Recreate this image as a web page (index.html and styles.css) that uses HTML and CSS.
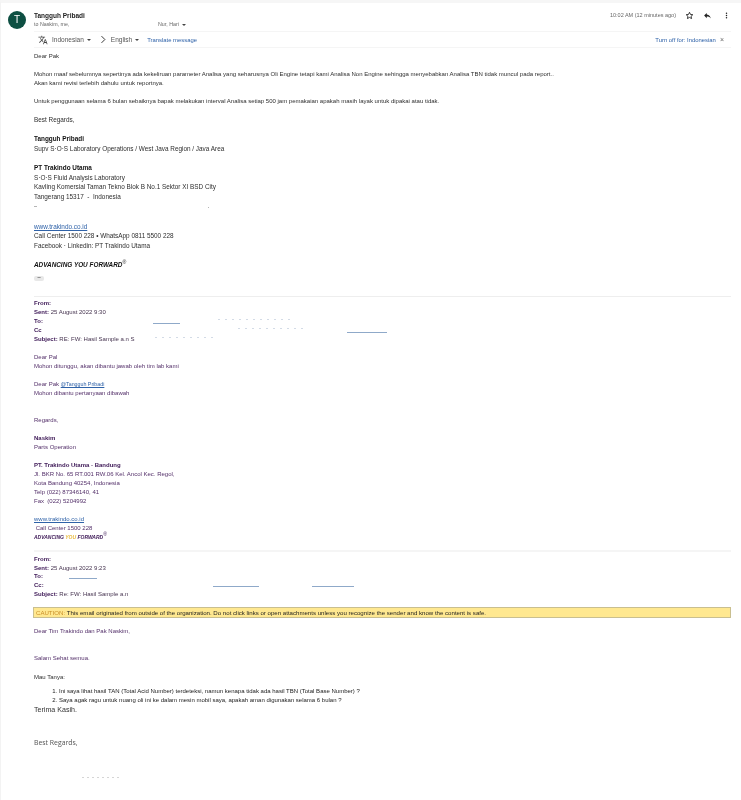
FILE: index.html
```html
<!DOCTYPE html>
<html lang="id">

<head>
    <meta charset="UTF-8">
    <meta name="viewport" content="width=device-width, initial-scale=1.0">
    <title>Tangguh Pribadi - mail</title>
    <link rel="stylesheet" href="styles.css">
</head>

<body>
    <div class="mail">
        <div class="head">
            <div class="avatar">T</div>
            <div class="who">
                <div class="sender">Tangguh Pribadi</div>
                <div class="to"><span class="to-main">to Naskim, me,</span><span>Nur, Hari</span><span class="caret"></span></div>
            </div>
            <div class="time">10:02 AM (12 minutes ago)</div>
            <svg class="icon" viewBox="0 0 24 24"><path fill="none" stroke="#222" stroke-width="2.400" stroke-linejoin="round" d="M12 3.500l2.600 5.700 6.200.7-4.600 4.200 1.300 6.100-5.500-3.100-5.500 3.100 1.300-6.100-4.600-4.200 6.200-.7z"/></svg>
            <svg class="icon" viewBox="0 0 24 24"><path fill="#222" d="M10 9V5l-7 7 7 7v-4.100c5 0 8.500 1.600 11 5.100-1-5-4-10-11-11z"/></svg>
            <svg class="icon icon-last" viewBox="0 0 24 24"><path fill="#222" d="M12 8a2 2 0 100-4 2 2 0 000 4zm0 2a2 2 0 100 4 2 2 0 000-4zm0 6a2 2 0 100 4 2 2 0 000-4z"/></svg>
        </div>

        <div class="translate">
            <svg class="tr-icon" viewBox="0 0 24 24"><path fill="#444" d="M12.900 15.100l-2.600-2.500c1.800-2 3-4.200 3.800-6.600H17V4h-7V2H8v2H1v2h11.200c-.7 1.900-1.700 3.800-3.200 5.400-.9-1-1.700-2.100-2.300-3.400h-2c.7 1.600 1.700 3.200 3 4.600l-5.100 5L4 19l5-5 3.100 3.100zM18.500 10h-2L12 22h2l1.100-3h4.800l1.100 3h2zm-2.600 7l1.600-4.300 1.600 4.300z"/></svg>
            <span class="tr-lang">Indonesian</span><span class="caret"></span>
            <svg class="tr-arrow" viewBox="0 0 10 12"><path fill="none" stroke="#333" stroke-width="1.300" d="M3 1.500L7.500 6 3 10.500"/></svg>
            <span class="tr-lang">English</span><span class="caret"></span>
            <a class="tr-link" href="#">Translate message</a>
            <a class="tr-off" href="#">Turn off for: Indonesian</a>
            <span class="tr-x">×</span>
        </div>

        <div class="body">
            <p>Dear Pak</p>
            <p class="gap">Mohon maaf sebelumnya sepertinya ada kekeliruan parameter Analisa yang seharusnya Oli Engine tetapi kami Analisa Non Engine sehingga menyebabkan Analisa TBN tidak muncul pada report..<br>Akan kami revisi terlebih dahulu untuk reportnya.</p>
            <p class="gap">Untuk penggunaan selama 6 bulan sebaiknya bapak melakukan interval Analisa setiap 500 jam pemakaian apakah masih layak untuk dipakai atau tidak.</p>
            <p class="gap regards">Best Regards,</p>

            <div class="sig">
                <p><b>Tangguh Pribadi</b><br>Supv S·O·S Laboratory Operations / West Java Region / Java Area</p>
                <p class="sig-gap"><b>PT Trakindo Utama</b><br>S·O·S Fluid Analysis Laboratory<br>Kavling Komersial Taman Tekno Blok B No.1 Sektor XI BSD City<br>Tangerang 15317 &nbsp;-&nbsp; Indonesia</p>
                <div class="blank-line"><i class="mark mark-a"></i><i class="mark mark-b"></i></div>
                <p class="sig-gap"><a href="#">www.trakindo.co.id</a><br>Call Center 1500 228 • WhatsApp 0811 5500 228<br>Facebook · Linkedin: PT Trakindo Utama</p>
                <p class="motto">ADVANCING YOU FORWARD<sup>®</sup></p>
                <div class="more-dots">•••</div>
            </div>

            <hr class="rule">

            <div class="quote">
                <div class="meta">
                    <b>From:</b><br><b>Sent:</b> 25 August 2022 9:30<br><b>To:</b><br><b>Cc</b><br><b>Subject:</b> RE: FW: Hasil Sample a.n S
                    <i class="line line-1"></i><i class="line faint line-2"></i><i class="line faint line-3"></i><i class="line line-4"></i><i class="line faint line-5"></i>
                </div>
                <p class="gap-q">Dear Pal<br>Mohon ditunggu, akan dibantu jawab oleh tim lab kami</p>
                <p class="gap-q">Dear Pak <a class="mention" href="#">@Tangguh Pribadi</a><br>Mohon dibantu pertanyaan dibawah</p>
                <p class="gap-wide">Regards,</p>
                <p class="gap-q"><b>Naskim</b><br>Parts Operation</p>
                <p class="gap-q"><b>PT. Trakindo Utama - Bandung</b><br>Jl. BKR No. 65 RT.001 RW.06 Kel. Ancol Kec. Regol,<br>Kota Bandung 40254, Indonesia<br>Telp (022) 87346140, 41<br>Fax&nbsp; (022) 5204992</p>
                <p class="gap-q"><a href="#">www.trakindo.co.id</a><br>&nbsp;Call Center 1500 228</p>
                <p class="motto-small">ADVANCING <span class="you">YOU</span> FORWARD<sup>®</sup></p>
            </div>

            <hr class="rule rule-2">

            <div class="quote">
                <div class="meta meta-2">
                    <b>From:</b><br><b>Sent:</b> 25 August 2022 9:23<br><b>To:</b><br><b>Cc:</b><br><b>Subject:</b> Re: FW: Hasil Sample a.n
                    <i class="line line-6"></i><i class="line line-7"></i><i class="line line-8"></i>
                </div>
            </div>

            <div class="caution"><span class="caution-tag">CAUTION:</span> This email originated from outside of the organization. Do not click links or open attachments unless you recognize the sender and know the content is safe.</div>

            <div class="quote">
                <p>Dear Tim Trakindo dan Pak Naskim,</p>
                <p class="gap-wide">Salam Sehat semua.</p>
            </div>
            <p class="gap-ask">Mau Tanya:</p>
            <ol class="ask">
                <li>Ini saya lihat hasil TAN (Total Acid Number) terdeteksi, namun kenapa tidak ada hasil TBN (Total Base Number) ?</li>
                <li>Saya agak ragu untuk nuang oli ini ke dalam mesin mobil saya, apakah aman digunakan selama 6 bulan ?</li>
            </ol>
            <p class="thanks">Terima Kasih.</p>
            <p class="closing">Best Regards,</p>
            <div class="tail"><i class="mark mark-c"></i></div>
        </div>
    </div>
</body>

</html>
```

FILE: styles.css
```css
body {
    margin: 0;
    background: #fff;
    font-family: "Liberation Sans", Arial, sans-serif;
    color: #2e2e2e;
}

p {
    margin: 0;
}

a {
    color: #2f62a8;
}

.mail {
    height: 800px;
    box-sizing: border-box;
    overflow: hidden;
    padding: 8px 10px 0 7px;
    border-top: 3px solid #f6f6f6;
    border-left: 1px solid #f3f3f3;
    filter: blur(0.3px);
}

.head {
    display: flex;
    align-items: flex-start;
    height: 19px;
}

.avatar {
    width: 18px;
    height: 18px;
    margin: 0 8px 0 0;
    border-radius: 50%;
    background: #0d4f42;
    color: #fff;
    font-size: 10px;
    line-height: 18px;
    text-align: center;
}

.who {
    flex: 1;
}

.sender {
    font-size: 6.500px;
    font-weight: bold;
    line-height: 9px;
    color: #222;
}

.to {
    display: flex;
    align-items: center;
    font-size: 5.300px;
    line-height: 9px;
    color: #666;
}

.to-main {
    width: 124px;
}

.caret {
    display: inline-block;
    margin-left: 3px;
    border-left: 2px solid transparent;
    border-right: 2px solid transparent;
    border-top: 2.500px solid #444;
}

.time {
    font-size: 5.500px;
    line-height: 9px;
    color: #666;
}

.icon {
    width: 9px;
    height: 9px;
    margin-left: 9px;
}

.icon-last {
    margin-left: 10px;
}

.translate {
    display: flex;
    align-items: center;
    height: 15px;
    margin: 1px 0 0 26px;
    border-top: 1px solid #f5f5f5;
    border-bottom: 1px solid #f5f5f5;
    font-size: 6.500px;
    color: #555;
}

.tr-icon {
    width: 10px;
    height: 10px;
    margin: 0 4px 0 4px;
}

.tr-arrow {
    width: 8px;
    height: 9px;
    margin: 0 4px 0 8px;
}

.tr-link {
    margin-left: 8px;
    font-size: 5.900px;
    text-decoration: none;
}

.tr-off {
    margin-left: auto;
    font-size: 5.900px;
    text-decoration: none;
}

.tr-x {
    margin: 0 7px 0 4px;
    font-size: 7px;
    color: #666;
}

.body {
    margin: 4px 0 0 26px;
    font-size: 6px;
    line-height: 9.100px;
}

.gap {
    margin-top: 9px;
}

.regards {
    font-size: 6.400px;
}

.sig {
    margin-top: 9.500px;
    font-size: 6.400px;
    line-height: 9.700px;
}

.sig b {
    color: #111;
}

.sig-gap {
    margin-top: 9.700px;
}

.blank-line {
    position: relative;
    height: 10px;
}

.mark {
    position: absolute;
    display: block;
    height: 1px;
    background: #b5b5b5;
}

.mark-a {
    left: 0;
    top: 4px;
    width: 3px;
}

.mark-b {
    left: 174px;
    top: 5px;
    width: 1px;
}

.mark-c {
    left: 48px;
    top: 9px;
    width: 38px;
    background: repeating-linear-gradient(90deg, #d5d5d5 0 2px, #fff 2px 5px);
}

.motto {
    margin-top: 9px;
    font-weight: bold;
    font-style: italic;
    color: #111;
}

sup {
    font-size: 5px;
    line-height: 0;
    font-weight: normal;
}

.more-dots {
    width: 10px;
    height: 5px;
    margin-top: 6.500px;
    border-radius: 2px;
    background: #e8e8e8;
    color: #333;
    font-size: 3px;
    line-height: 5px;
    text-align: center;
}

.rule {
    height: 1px;
    margin: 15px 0 2px;
    border: 0;
    background: #eee;
}

.rule-2 {
    margin: 8px 0 3px;
    height: 2px;
    background: #f5f5f5;
}

.quote {
    color: #54306a;
    line-height: 9px;
}

.quote b {
    color: #3d1856;
}

.meta {
    position: relative;
    line-height: 9px;
    color: #45334f;
}

.meta-2 {
    line-height: 8.800px;
}

.line {
    position: absolute;
    display: block;
    height: 1px;
    background: #8fa9c9;
}

.faint {
    background: repeating-linear-gradient(90deg, #d3dbe6 0 2px, #fff 2px 7px);
}

.line-1 {
    left: 119px;
    top: 24px;
    width: 27px;
}

.line-2 {
    left: 184px;
    top: 20px;
    width: 77px;
}

.line-3 {
    left: 204px;
    top: 29px;
    width: 66px;
}

.line-4 {
    left: 313px;
    top: 33px;
    width: 40px;
}

.line-5 {
    left: 121px;
    top: 38px;
    width: 60px;
}

.line-6 {
    left: 35px;
    top: 23px;
    width: 28px;
}

.line-7 {
    left: 179px;
    top: 31px;
    width: 46px;
}

.line-8 {
    left: 278px;
    top: 31px;
    width: 42px;
}

.gap-q {
    margin-top: 9px;
}

.gap-wide {
    margin-top: 18px;
}

.mention {
    font-size: 5.300px;
}

.motto-small {
    font-size: 5px;
    font-weight: bold;
    font-style: italic;
    color: #3d1856;
}

.you {
    color: #e8b93a;
}

.caution {
    margin: 8px 0 9px -1px;
    padding: 0 2px;
    background: #ffe890;
    border: 1px solid #c9bf90;
    color: #1e1e1e;
    font-size: 6.100px;
    line-height: 9px;
}

.caution-tag {
    color: #c98f2a;
}

.gap-ask {
    margin-top: 10px;
}

.ask {
    margin: 5px 0 0;
    padding: 0 0 0 25px;
    color: #222;
}

.thanks {
    font-size: 7.100px;
    line-height: 10px;
    color: #333;
}

.closing {
    margin-top: 23px;
    font-family: "Open Sans", sans-serif;
    font-size: 6.900px;
    line-height: 10px;
    color: #555;
}

.tail {
    position: relative;
    height: 30px;
    margin-top: 20px;
}
```
